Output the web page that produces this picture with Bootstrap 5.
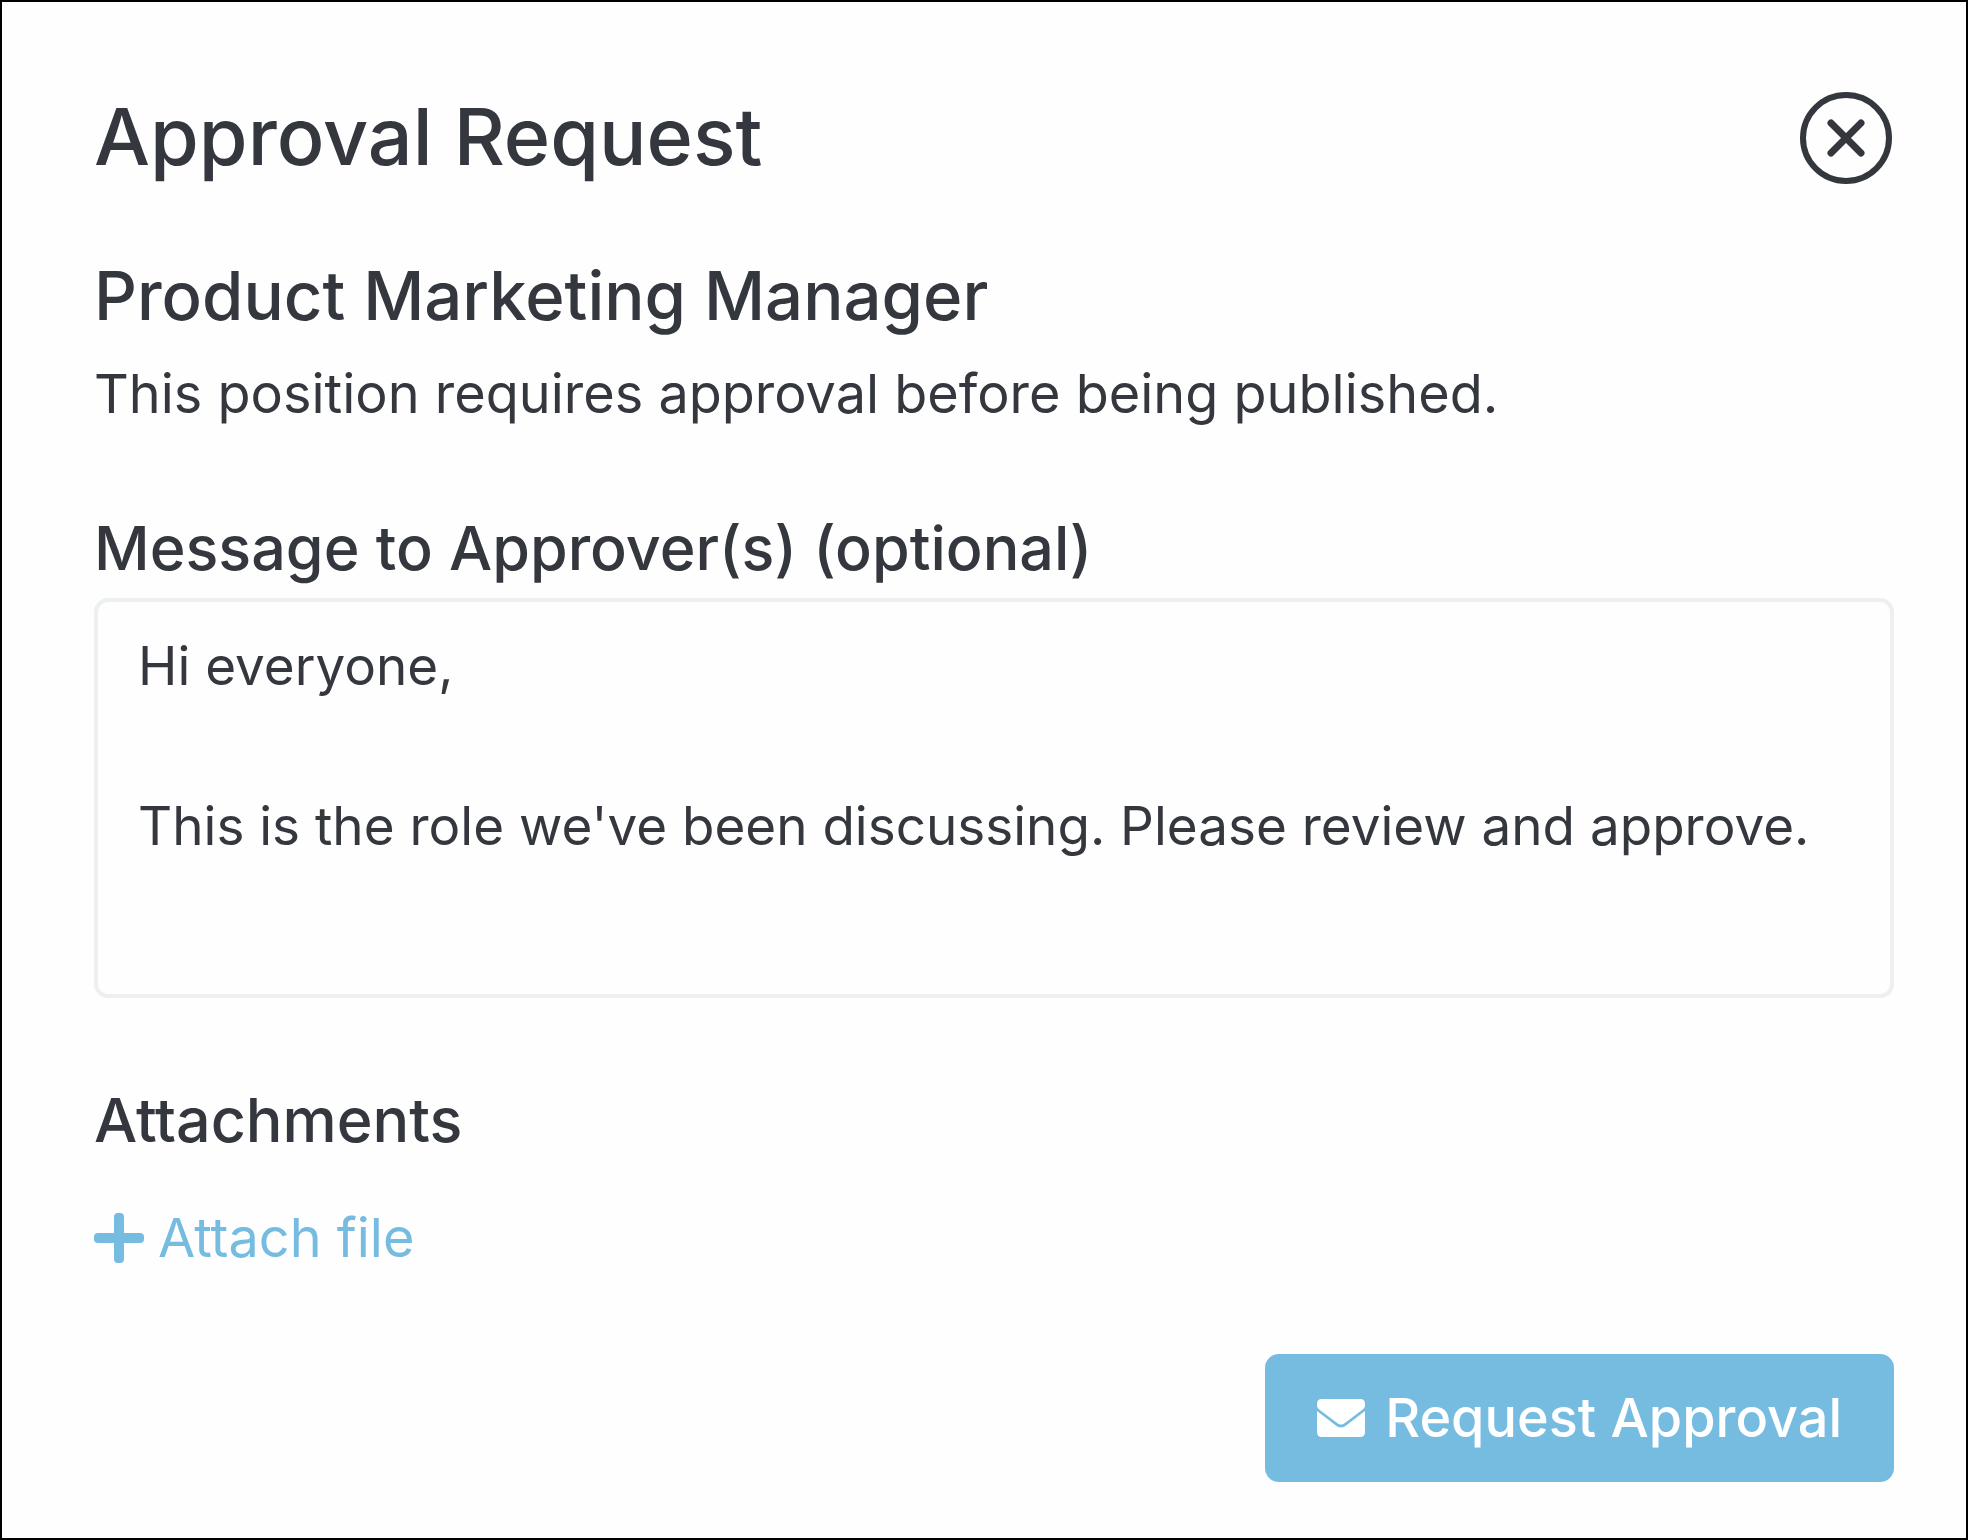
<!DOCTYPE html>
<html lang="en">
<head>
<meta charset="utf-8">
<meta name="viewport" content="width=device-width, initial-scale=1">
<title>Approval Request</title>
<link href="https://cdn.jsdelivr.net/npm/bootstrap@5.3.0/dist/css/bootstrap.min.css" rel="stylesheet">
<style>
  body { font-family: Inter, "Liberation Sans", sans-serif; font-size: 54px; line-height: 80px; color: #34373e; background: #fefefe; }
  .request-panel { border: 2px solid #000; padding: 88px 72px 56px 92px; }
  .panel-title { font-size: 79px; line-height: 92px; font-weight: 500; padding-bottom: 4px; }
  .job-block { margin-top: 62px; }
  .job-title { font-size: 67px; line-height: 96px; font-weight: 500; margin-bottom: 10px; }
  .message-block { margin-top: 74px; }
  .field-title { font-size: 61px; line-height: 80px; font-weight: 500; }
  .message-box { font-size: 53px; line-height: 80px; color: inherit; background: transparent; border: 4px solid #edf0f0; border-radius: 14px; padding: 24px 40px; height: 400px; margin-top: 10px; resize: none; overflow: hidden; }
  .close-btn svg { width: 94px; height: 94px; display: block; }
  .attach-block { margin-top: 82px; }
  .attach-link { color: #76bce1; margin-top: 38px; gap: 14px; }
  .attach-link svg { width: 50px; height: 50px; }
  .panel-footer { margin-top: 76px; }
  .send-btn { font-size: 54px; line-height: 80px; font-weight: 500; color: #fff; background: #76bce1; border: 0; border-radius: 14px; padding: 24px 52px; gap: 20px; }
  .send-btn:hover { color: #fff; background: #5eaedb; }
  .send-btn svg { width: 48px; height: 38px; }
</style>
</head>
<body>
<main class="request-panel d-flex flex-column min-vh-100">
  <header class="d-flex justify-content-between align-items-center">
    <h1 class="panel-title mb-0">Approval Request</h1>
    <button type="button" class="close-btn btn p-0 border-0" aria-label="Close">
      <svg viewBox="0 0 94 94" fill="none" stroke="#34373e" stroke-linecap="round"><circle cx="46" cy="47" r="43" stroke-width="6"/><path d="M31 32 61 62M61 32 31 62" stroke-width="7"/></svg>
    </button>
  </header>
  <section class="job-block">
    <h2 class="job-title">Product Marketing Manager</h2>
    <p class="mb-0">This position requires approval before being published.</p>
  </section>
  <section class="message-block">
    <label class="field-title d-block" for="message">Message to Approver(s) (optional)</label>
    <textarea class="form-control message-box" id="message">Hi everyone,

This is the role we've been discussing. Please review and approve.</textarea>
  </section>
  <section class="attach-block d-flex flex-column align-items-start">
    <h3 class="field-title mb-0">Attachments</h3>
    <a href="#" class="attach-link d-flex align-items-center text-decoration-none">
      <svg viewBox="0 0 50 50" fill="currentColor" aria-hidden="true"><rect x="20" width="10" height="50" rx="4"/><rect y="20" width="50" height="10" rx="4"/></svg>
      Attach file</a>
  </section>
  <footer class="panel-footer d-flex justify-content-end">
    <button type="button" class="btn send-btn d-flex align-items-center">
      <svg viewBox="0 0 50 38" preserveAspectRatio="none" fill="currentColor" aria-hidden="true"><path d="M5 0h40q5 0 5 5v2q0 2-3 4L29 24q-4 3-8 0L3 11Q0 9 0 7V5q0-5 5-5z"/><path d="M0 12 19 26q6 5 12 0L50 12v21q0 5-5 5H5q-5 0-5-5z"/></svg>
      Request Approval</button>
  </footer>
</main>
<script src="https://cdn.jsdelivr.net/npm/bootstrap@5.3.0/dist/js/bootstrap.bundle.min.js"></script>
</body>
</html>
